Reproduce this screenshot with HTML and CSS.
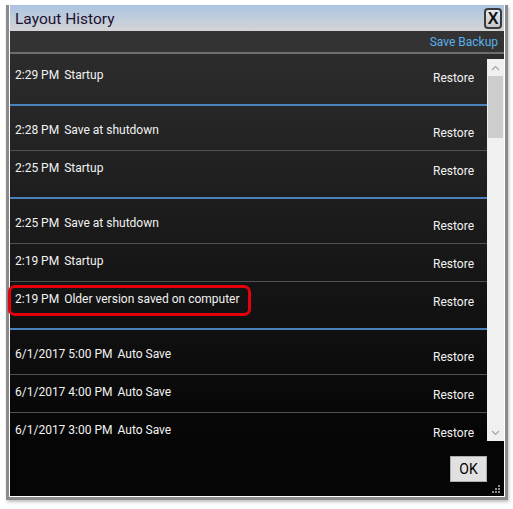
FILE: index.html
```html
<!DOCTYPE html>
<html>
<head>
<meta charset="utf-8">
<link rel="stylesheet" href="styles.css">
</head>
<body>
<div class="window">
  <div class="titlebar">
    <span class="title">Layout History</span>
    <span class="close">X</span>
  </div>
  <div class="toolbar"><span class="save">Save Backup</span></div>
  <div class="content">
    <div class="listwrap">
      <div class="list">
        <div class="group first">
          <div class="row"><span class="label"><span class="time">2:29 PM</span><span>Startup</span></span><span class="restore">Restore</span></div>
        </div>
        <div class="group">
          <div class="row"><span class="label"><span class="time">2:28 PM</span><span>Save at shutdown</span></span><span class="restore">Restore</span></div>
          <div class="row"><span class="label"><span class="time">2:25 PM</span><span>Startup</span></span><span class="restore">Restore</span></div>
        </div>
        <div class="group">
          <div class="row"><span class="label"><span class="time">2:25 PM</span><span>Save at shutdown</span></span><span class="restore">Restore</span></div>
          <div class="row"><span class="label"><span class="time">2:19 PM</span><span>Startup</span></span><span class="restore">Restore</span></div>
          <div class="row"><span class="label"><span class="time">2:19 PM</span><span>Older version saved on computer</span></span><span class="restore">Restore</span></div>
        </div>
        <div class="group">
          <div class="row"><span class="label"><span class="time">6/1/2017 5:00 PM</span><span>Auto Save</span></span><span class="restore">Restore</span></div>
          <div class="row"><span class="label"><span class="time">6/1/2017 4:00 PM</span><span>Auto Save</span></span><span class="restore">Restore</span></div>
          <div class="row"><span class="label"><span class="time">6/1/2017 3:00 PM</span><span>Auto Save</span></span><span class="restore">Restore</span></div>
        </div>
      </div>
      <div class="scrollbar">
        <div class="arrow"><svg width="9" height="6" viewBox="0 0 9 6"><path d="M1 5 L4.5 1.5 L8 5" fill="none" stroke="#a3a3a3" stroke-width="1.2"/></svg></div>
        <div class="track"><div class="thumb"></div></div>
        <div class="arrow"><svg width="9" height="6" viewBox="0 0 9 6"><path d="M1 1 L4.5 4.5 L8 1" fill="none" stroke="#a3a3a3" stroke-width="1.2"/></svg></div>
      </div>
    </div>
    <div class="footer">
      <span class="ok">OK</span>
      <svg class="grip" width="9" height="9" viewBox="0 0 9 9">
        <rect x="6" y="0" width="2" height="2" fill="#8c8c8c"/>
        <rect x="3" y="3" width="2" height="2" fill="#8c8c8c"/>
        <rect x="6" y="3" width="2" height="2" fill="#8c8c8c"/>
        <rect x="0" y="6" width="2" height="2" fill="#8c8c8c"/>
        <rect x="3" y="6" width="2" height="2" fill="#8c8c8c"/>
        <rect x="6" y="6" width="2" height="2" fill="#8c8c8c"/>
      </svg>
    </div>
  </div>
</div>
<div class="highlight"></div>
</body>
</html>
```

FILE: styles.css
```css
html, body {
  margin: 0;
  padding: 0;
  background: #ffffff;
}
body {
  position: relative;
  width: 513px;
  height: 509px;
  overflow: hidden;
  font-family: Roboto, "Open Sans", sans-serif;
}
.window {
  position: absolute;
  left: 6px;
  top: 5px;
  width: 494px;
  border: 3px solid #8b8b8b;
  border-top: 0;
  padding: 0 1px 1px 1px;
  background: #ffffff;
  box-shadow: 1px 2px 3px rgba(0,0,0,0.25);
}
.titlebar {
  height: 26px;
  display: flex;
  align-items: center;
  justify-content: space-between;
  padding: 0 2px 0 5px;
  background: linear-gradient(#abc4e2, #d4d4d4);
}
.title {
  font-size: 15.5px;
  padding-top: 1px;
  color: #1e0f30;
}
.close {
  width: 14px;
  height: 17px;
  border: 2px solid #3a3a3a;
  border-radius: 4px;
  background: linear-gradient(#e6e8ec, #c6c8cc);
  font-family: "Liberation Sans", sans-serif;
  font-weight: bold;
  font-size: 16px;
  line-height: 17px;
  text-align: center;
  color: #111;
}
.toolbar {
  height: 21px;
  background: #333333;
  border-bottom: 2px solid #6e6e6e;
  display: flex;
  justify-content: flex-end;
  align-items: center;
  padding-right: 6px;
}
.save {
  color: #5ab0ee;
  font-size: 12px;
}
.content {
  background: linear-gradient(#2c2c2c 0px, #050505 387px, #050505 100%);
}
.listwrap {
  height: 387px;
  display: flex;
}
.list {
  flex: 1;
  overflow: hidden;
}
.group {
  border-top: 2px solid #4a82bd;
  padding: 7px 0 8px 0;
}
.group.first {
  border-top: 0;
  padding-top: 4px;
}
.row {
  height: 37px;
  border-bottom: 1px solid #515151;
  display: flex;
  justify-content: space-between;
  align-items: flex-start;
  padding: 0 13px 0 5px;
  color: #f2f2f2;
  font-size: 12px;
  line-height: 16px;
}
.row:last-child {
  border-bottom-color: transparent;
}
.label {
  display: flex;
  gap: 5px;
  padding-top: 9px;
}
.restore {
  padding-top: 12px;
}
.scrollbar {
  width: 17px;
  margin-top: 5px;
  background: #f0f0f0;
  display: flex;
  flex-direction: column;
}
.arrow {
  height: 17px;
  display: flex;
  align-items: center;
  justify-content: center;
}
.track {
  flex: 1;
}
.thumb {
  height: 62px;
  margin: 0 1px;
  background: #cdcdcd;
}
.footer {
  height: 55px;
  display: flex;
  justify-content: flex-end;
  align-items: flex-start;
  position: relative;
}
.ok {
  margin-top: 15px;
  margin-right: 17px;
  width: 35px;
  height: 24px;
  border: 1px solid #adadad;
  background: #e1e1e1;
  color: #000;
  font-size: 14px;
  line-height: 24px;
  text-align: center;
}
.grip {
  position: absolute;
  right: 3px;
  bottom: 2px;
}
.highlight {
  position: absolute;
  left: 8px;
  top: 285px;
  width: 237px;
  height: 25px;
  border: 3px solid #e6000c;
  border-radius: 7px;
  box-shadow: 0 0 1px rgba(0,0,0,0.6);
}
```
